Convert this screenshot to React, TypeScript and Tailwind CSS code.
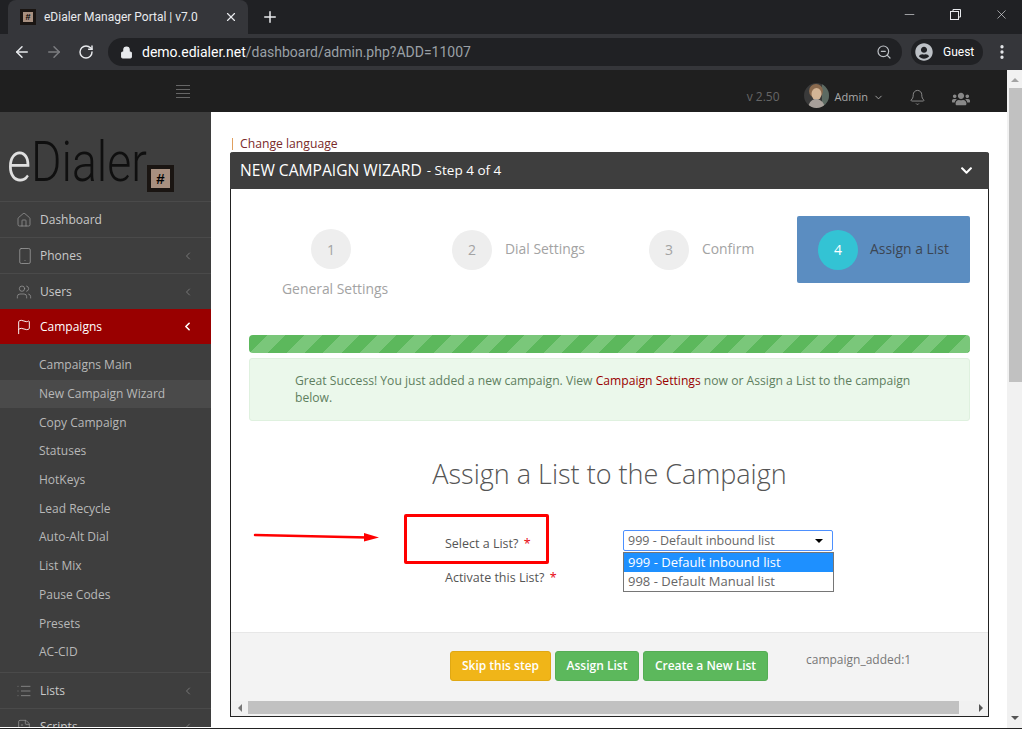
import {
  ArrowLeft,
  ArrowRight,
  Bell,
  ChevronDown,
  ChevronLeft,
  Flag,
  Home,
  List,
  Lock,
  Minus,
  MoreVertical,
  Plus,
  RotateCw,
  Smartphone,
  X,
  ZoomOut,
  FileText,
  Users,
} from "lucide-react";
import { FaUsers, FaUserCircle, FaChevronDown } from "react-icons/fa";

const subMenu = [
  "Campaigns Main",
  "New Campaign Wizard",
  "Copy Campaign",
  "Statuses",
  "HotKeys",
  "Lead Recycle",
  "Auto-Alt Dial",
  "List Mix",
  "Pause Codes",
  "Presets",
  "AC-CID",
];

const HashIcon = ({ box, inner, text }: { box: string; inner: string; text: string }) => (
  <div className={`${box} bg-[#1a1512] flex items-center justify-center`}>
    <div className={`${inner} bg-[#a89080] flex items-center justify-center font-bold text-black leading-none ${text} [font-family:'Liberation_Sans',sans-serif]`}>
      #
    </div>
  </div>
);

const Chrome = () => (
  <div className="[font-family:'Roboto',sans-serif]">
    <div className="h-[34px] bg-[#202124] flex pl-2 relative">
      <div className="w-[240px] h-[34px] bg-[#35363a] rounded-t-lg flex items-center pl-3 pr-[10px]">
        <HashIcon box="w-4 h-4 shrink-0" inner="w-[10px] h-[10px]" text="text-[9px]" />
        <span className="ml-2 text-[12px] text-[#e8eaed] whitespace-nowrap">eDialer Manager Portal | v7.0</span>
        <X className="ml-auto w-[14px] h-[14px] text-[#e8eaed]" strokeWidth={2} />
      </div>
      <Plus className="ml-[13px] mt-[8px] w-[18px] h-[18px] text-[#e8eaed]" strokeWidth={2} />
      <div className="ml-auto flex items-start pt-[7px] pr-[13px] gap-[31px] text-[#e8eaed]">
        <Minus className="w-[15px] h-[15px]" strokeWidth={1} />
        <svg width="15" height="15" viewBox="0 0 15 15" fill="none" stroke="currentColor" strokeWidth="1">
          <rect x="2.5" y="4.5" width="8" height="8" />
          <path d="M5 4.5V2.5H12.5V10H10.5" />
        </svg>
        <X className="w-[15px] h-[15px]" strokeWidth={1} />
      </div>
    </div>
    <div className="h-[36px] bg-[#35363a] flex items-center pl-[13px] pr-[11px]">
      <ArrowLeft className="w-[18px] h-[18px] text-[#e8eaed]" strokeWidth={2} />
      <ArrowRight className="ml-[14px] w-[18px] h-[18px] text-[#7c7d80]" strokeWidth={2} />
      <RotateCw className="ml-[15px] w-[16px] h-[16px] text-[#e8eaed]" strokeWidth={2.2} />
      <div className="ml-[14px] w-[794px] h-[28px] bg-[#202124] rounded-full flex items-center pl-3 pr-[10px]">
        <Lock className="w-[13px] h-[13px] text-[#e8eaed] fill-[#e8eaed]" strokeWidth={2} />
        <span className="ml-[9px] text-[14px] text-white">demo.edialer.net</span>
        <span className="text-[14px] text-[#9aa0a6]">/dashboard/admin.php?ADD=11007</span>
        <ZoomOut className="ml-auto w-[16px] h-[16px] text-[#bdc1c6]" strokeWidth={1.8} />
      </div>
      <div className="ml-[9px] w-[72px] h-[26px] bg-[#202124] rounded-full flex items-center pl-[4px]">
        <FaUserCircle className="w-[18px] h-[18px] text-[#bdc1c6]" />
        <span className="ml-[10px] text-[12px] text-white">Guest</span>
      </div>
      <MoreVertical className="ml-[10px] w-[18px] h-[18px] text-[#e8eaed]" strokeWidth={2.4} />
    </div>
  </div>
);

const TopBar = () => (
  <div className="h-[42px] bg-[#1f1f1f] flex items-center pl-[176px] pr-[37px] text-[#8a8a8a]">
    <div className="w-[14px] flex flex-col gap-[3px] mt-[1px]">
      <div className="h-px bg-[#666]" />
      <div className="h-px bg-[#666]" />
      <div className="h-px bg-[#666]" />
      <div className="h-px bg-[#666]" />
    </div>
    <span className="ml-auto text-[12px] text-[#666] mt-[12px]">v 2.50</span>
    <svg className="ml-[24px] mt-[8px]" width="25" height="25" viewBox="0 0 25 25">
      <clipPath id="avatar">
        <circle cx="12.5" cy="12.5" r="12.5" />
      </clipPath>
      <g clipPath="url(#avatar)">
        <rect width="25" height="25" fill="#3a3a3a" />
        <rect x="18" width="7" height="25" fill="#5c6a62" />
        <ellipse cx="12" cy="8" rx="7" ry="7" fill="#8a6a4e" />
        <ellipse cx="12.5" cy="11" rx="5" ry="6" fill="#d3b596" />
        <path d="M4 25C5 18 9 16 12 16S20 18 21 25Z" fill="#a8a09a" />
      </g>
    </svg>
    <span className="ml-[6px] text-[11px] text-[#aaa] mt-[12px]">Admin</span>
    <ChevronDown className="ml-[5px] w-[11px] h-[11px] text-[#aaa] mt-[12px]" />
    <Bell className="ml-[25px] w-[17px] h-[17px] text-[#999] mt-[12px]" strokeWidth={1.2} />
    <FaUsers className="ml-[26px] w-[18px] h-[18px] text-[#888] mt-[15px]" />
  </div>
);

const SideItem = ({ icon, label, arrow = true }: { icon: React.ReactNode; label: string; arrow?: boolean }) => (
  <div className="h-[36px] border-b border-[#4a4a4a] flex items-center pl-[16px] pr-[17px] text-[#c9c9c9] text-[12px]">
    <span className="w-[24px] text-[#999]">{icon}</span>
    <span>{label}</span>
    {arrow && <ChevronLeft className="ml-auto w-[12px] h-[12px] text-[#777]" />}
  </div>
);

const Sidebar = () => (
  <div className="w-[211px] h-[615px] shrink-0 bg-[#3e3e3e] overflow-hidden">
    <div className="h-[90px] border-b border-[#4a4a4a] pl-[7px] flex items-start">
      <div className="mt-[19px] h-[62px] w-[140px] text-[56px] leading-[62px] font-light [font-family:'Roboto',sans-serif] origin-left scale-x-[0.83] whitespace-nowrap">
        <span className="text-[#e0e0e0]">e</span>
        <span className="text-[#0f0f0f]">Dialer</span>
      </div>
      <div className="mt-[53px]">
        <HashIcon box="w-[27px] h-[27px]" inner="w-[19px] h-[19px]" text="text-[15px]" />
      </div>
    </div>
    <SideItem icon={<Home className="w-[16px] h-[16px]" strokeWidth={1.1} />} label="Dashboard" arrow={false} />
    <SideItem icon={<Smartphone className="w-[18px] h-[18px]" strokeWidth={1.1} />} label="Phones" />
    <SideItem icon={<Users className="w-[16px] h-[16px]" strokeWidth={1.1} />} label="Users" />
    <div className="-mt-px h-[35px] bg-[#990000] flex items-center pl-[16px] pr-[17px] text-white text-[12px]">
      <Flag className="w-[16px] h-[16px] mr-[8px]" strokeWidth={1.4} />
      <span>Campaigns</span>
      <ChevronLeft className="ml-auto w-[13px] h-[13px]" strokeWidth={3} />
    </div>
    <div className="pt-[7px] pb-[5.5px] border-b border-[#4a4a4a]">
      {subMenu.map((item) => (
        <div
          key={item}
          className={`h-[28.7px] flex items-center pl-[39px] text-[12px] text-[#b8b8b8] ${item === "New Campaign Wizard" ? "bg-[#4a4a4a]" : ""}`}
        >
          {item}
        </div>
      ))}
    </div>
    <SideItem icon={<List className="w-[16px] h-[16px]" strokeWidth={1.1} />} label="Lists" />
    <SideItem icon={<FileText className="w-[16px] h-[16px]" strokeWidth={1.1} />} label="Scripts" />
  </div>
);

const Circle = ({ n, active = false }: { n: number; active?: boolean }) => (
  <div
    className={`w-10 h-10 shrink-0 rounded-full flex items-center justify-center text-[14px] ${active ? "bg-[#33c3d4] text-white" : "bg-[#eeeeee] text-[#a3a3a3]"}`}
  >
    {n}
  </div>
);

const Steps = () => (
  <div className="flex h-[67px] text-[13.9px] text-[#a3a3a3]">
    <div className="w-[182px] pl-[62px] pt-[13px]">
      <Circle n={1} />
      <div className="-ml-[29px] mt-[10px] whitespace-nowrap">General Settings</div>
    </div>
    <div className="w-[197px] pl-[21px] flex items-center gap-[13px]">
      <Circle n={2} />
      <span className="-mt-px">Dial Settings</span>
    </div>
    <div className="w-[169px] pl-[21px] flex items-center gap-[13px]">
      <Circle n={3} />
      <span className="-mt-px">Confirm</span>
    </div>
    <div className="w-[173px] pl-[21px] bg-[#5b8dc1] rounded-[2px] flex items-center gap-[12px] text-[#3b4654]">
      <Circle n={4} active />
      <span className="-mt-px">Assign a List</span>
    </div>
  </div>
);

const Wizard = () => (
  <div className="h-[565px] border-x border-b border-[#222] rounded-t-[3px] flex flex-col">
    <div className="-mx-px h-[37px] bg-[#3e3e3e] rounded-t-[3px] flex items-center pl-[10px] pr-[16px] text-white">
      <span className="text-[15.6px]">NEW CAMPAIGN WIZARD</span>
      <span className="ml-[5px] text-[13.5px]">- Step 4 of 4</span>
      <FaChevronDown className="ml-auto w-[13px] h-[13px]" />
    </div>
    <div className="flex-1 px-[18px] pt-[27px] relative">
      <Steps />
      <div className="mt-[52px] h-[18px] rounded-[4px] bg-[repeating-linear-gradient(135deg,#5cb85c_0,#5cb85c_13px,#7ac77a_13px,#7ac77a_26px)]" />
      <div className="mt-[5px] h-[63px] bg-[#ebf8eb] border border-[#dff1df] rounded-[3px] pl-[45px] pr-[50px] pt-[13px] text-[12.15px] leading-[17px] text-[#5f7f5f]">
        Great Success! You just added a new campaign. View <span className="text-[#990000]">Campaign Settings</span> now or Assign a List to the campaign below.
      </div>
      <h2 className="mt-[35px] h-[36px] leading-[36px] text-center text-[27px] font-light text-[#555]">
        Assign a List to the Campaign
      </h2>
      <div className="mt-[38px] flex pl-[196px] text-[12.5px] text-[#555]">
        <div className="w-[178px]">
          <div className="h-[17px] mt-[5px]">
            Select a List? <span className="text-red-600 ml-[2px]">*</span>
          </div>
          <div className="h-[17px] mt-[17px]">
            Activate this List? <span className="text-red-600 ml-[2px]">*</span>
          </div>
        </div>
        <div className="relative w-[210px] h-[21px] border border-[#4d90fe] rounded-[2px] flex items-center pl-[4px] pr-[9px] pt-px text-[#666] text-[12.5px]">
          999 - Default inbound list
          <div className="ml-auto w-0 h-0 border-x-[4px] border-x-transparent border-t-[4px] border-t-black" />
          <div className="absolute left-[-1px] top-[21px] w-[211px] border border-[#767676] bg-white text-[13px] leading-[19px]">
            <div className="bg-[#1e90ff] text-white pl-[4px]">999 - Default inbound list</div>
            <div className="pl-[4px] text-[#666]">998 - Default Manual list</div>
          </div>
        </div>
      </div>
      <div className="absolute left-[173px] top-[325px] w-[145px] h-[50px] border-[3px] border-[#ff0000] rounded-[2px]" />
      <svg className="absolute left-[21px] top-[341px]" width="130" height="14" viewBox="0 0 130 14">
        <path d="M3 5L116 7.5" stroke="#ff0000" strokeWidth="2.5" strokeLinecap="round" />
        <polygon points="112,3 127,7.5 112,11.5" fill="#ff0000" />
      </svg>
    </div>
    <div className="h-[69px] bg-[#f3f3f3] border-t border-[#e7e7e7] flex pl-[219px] pt-[18px] text-[12px]">
      <button className="h-[30px] w-[101px] bg-[#f0b518] border border-[#e0a813] rounded-[3px] text-white font-semibold">Skip this step</button>
      <button className="ml-[4px] h-[30px] w-[84px] bg-[#5cb85c] border border-[#55ad55] rounded-[3px] text-white font-semibold">Assign List</button>
      <button className="ml-[4px] h-[30px] w-[125px] bg-[#5cb85c] border border-[#55ad55] rounded-[3px] text-white font-semibold">Create a New List</button>
      <span className="ml-[38px] text-[#777]">campaign_added:1</span>
    </div>
    <div className="h-[15px] bg-[#f1f1f1] flex items-start">
      <div className="w-[17px] h-[13px] flex items-center justify-center">
        <div className="w-0 h-0 border-y-[4px] border-y-transparent border-r-[4px] border-r-[#777]" />
      </div>
      <div className="w-[711px] h-[13px] bg-[#c1c1c1]" />
      <div className="flex-1 h-[13px] flex items-center justify-end pr-[5px]">
        <div className="w-0 h-0 border-y-[4px] border-y-transparent border-l-[4px] border-l-[#555]" />
      </div>
    </div>
  </div>
);

const PageScrollbar = () => (
  <div className="w-[15px] bg-[#f1f1f1] flex flex-col items-center">
    <div className="h-[18px] pt-[8px]">
      <div className="w-0 h-0 border-x-[4px] border-x-transparent border-b-[4px] border-b-[#a3a3a3]" />
    </div>
    <div className="ml-[2px] w-[13px] h-[294px] bg-[#c1c1c1]" />
    <div className="mt-auto h-[12px]">
      <div className="w-0 h-0 border-x-[4px] border-x-transparent border-t-[4px] border-t-[#555]" />
    </div>
  </div>
);

export default function App() {
  return (
    <div className="w-[1022px] h-[729px] overflow-hidden bg-white flex flex-col [font-family:'Open_Sans',sans-serif]">
      <Chrome />
      <div className="flex-1 flex min-h-0">
        <div className="flex-1 min-w-0">
          <TopBar />
          <div className="flex">
            <Sidebar />
            <div className="flex-1 min-w-0 pl-[19px] pr-[18px]">
              <div className="h-[40px] pt-[24px] pl-[2px] flex items-center text-[12.2px] text-[#7a2a2a] leading-none">
                <div className="w-px h-[12px] bg-[#e0a060] mr-[7px]" />
                Change language
              </div>
              <Wizard />
            </div>
          </div>
        </div>
        <PageScrollbar />
      </div>
      <div className="h-px bg-[#222]" />
    </div>
  );
}
